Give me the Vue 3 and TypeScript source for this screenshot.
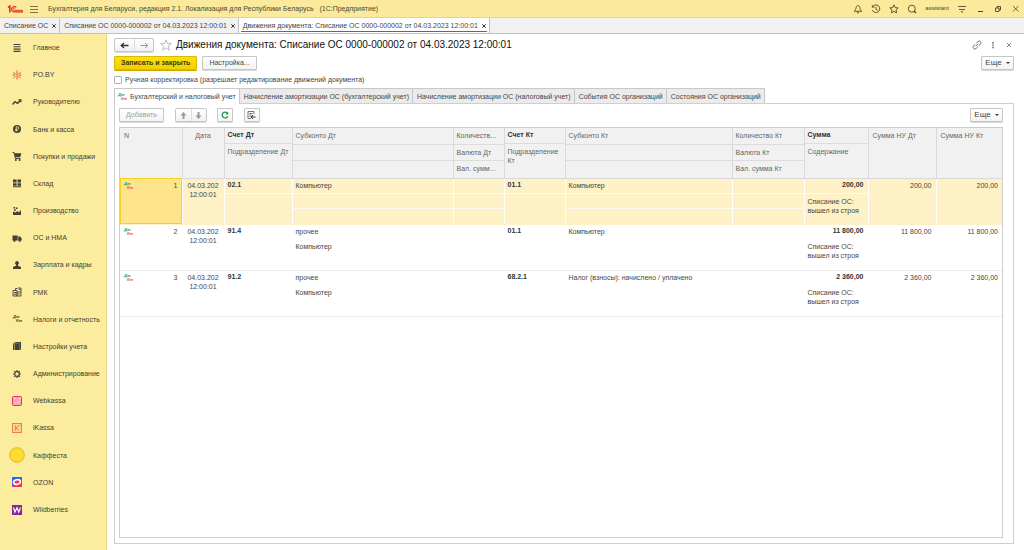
<script setup lang="ts">
import { ref } from 'vue'

interface Section { id: string; label: string }
interface Entry {
  n: number
  debit: string
  subDebit: string[]
  credit: string
  subCredit: string[]
  sum: string
}

const sections: Section[] = [
  { id: 'main', label: 'Главное' },
  { id: 'po', label: 'PO.BY' },
  { id: 'chief', label: 'Руководителю' },
  { id: 'bank', label: 'Банк и касса' },
  { id: 'cart', label: 'Покупки и продажи' },
  { id: 'store', label: 'Склад' },
  { id: 'factory', label: 'Производство' },
  { id: 'truck', label: 'ОС и НМА' },
  { id: 'person', label: 'Зарплата и кадры' },
  { id: 'rmk', label: 'РМК' },
  { id: 'tax', label: 'Налоги и отчетность' },
  { id: 'books', label: 'Настройки учета' },
  { id: 'gear', label: 'Администрирование' },
  { id: 'webkassa', label: 'Webkassa' },
  { id: 'ikassa', label: 'iKassa' },
  { id: 'coffee', label: 'Каффеста' },
  { id: 'ozon', label: 'OZON' },
  { id: 'wb', label: 'Wildberries' },
]

const windows = [
  'Списание ОС',
  'Списание ОС 0000-000002 от 04.03.2023 12:00:01',
  'Движения документа: Списание ОС 0000-000002 от 04.03.2023 12:00:01',
]
const activeWindow = ref(2)

const registers = [
  'Бухгалтерский и налоговый учет',
  'Начисление амортизации ОС (бухгалтерский учет)',
  'Начисление амортизации ОС (налоговый учет)',
  'События ОС организаций',
  'Состояния ОС организаций',
]
const activeRegister = ref(0)
const manual = ref(false)
const selected = ref(1)

const entries: Entry[] = [
  { n: 1, debit: '02.1', subDebit: ['Компьютер', '', ''], credit: '01.1', subCredit: ['Компьютер', '', ''], sum: '200,00' },
  { n: 2, debit: '91.4', subDebit: ['прочее', 'Компьютер', ''], credit: '01.1', subCredit: ['Компьютер', '', ''], sum: '11 800,00' },
  { n: 3, debit: '91.2', subDebit: ['прочее', 'Компьютер', ''], credit: '68.2.1', subCredit: ['Налог (взносы): начислено / уплачено', '', ''], sum: '2 360,00' },
]
</script>

<template>
  <div class="app">
    <header class="titlebar">
      <svg class="logo" width="17" height="10" viewBox="0 0 17 10" fill="none" stroke="#e0241b">
        <path d="M1 3.5 2.8 2V8.5" stroke-width="1.5" />
        <path d="M9.3 3.4A2.7 2.7 0 1 0 7.5 7.9H16" stroke-width="1.1" />
        <path d="M8.2 4.4A1.2 1.2 0 1 0 7.5 6.3H16" stroke-width="0.9" />
      </svg>
      <button class="plain" aria-label="Меню">
        <svg width="8" height="8" viewBox="0 0 8 8" stroke="#5c5636"><path d="M0 1.5h8M0 4.5h8M0 7.5h8" stroke-width="0.8" /></svg>
      </button>
      <span class="app-title">Бухгалтерия для Беларуси, редакция 2.1. Локализация для Республики Беларусь &nbsp; (1С:Предприятие)</span>
      <div class="sysicons">
        <button class="plain" aria-label="Уведомления">
          <svg width="10" height="10" viewBox="0 0 10 10" fill="none" stroke="#4a4630" stroke-width="0.9"><path d="M1.2 7.3C2.8 6.2 2.7 4.600 3.200 3.300 3.600 2.100 4.300 1.400 5 1.400s1.400.7 1.800 1.900c.5 1.300.4 2.900 2 4zM4 8.700h2" /></svg>
        </button>
        <button class="plain" aria-label="История">
          <svg width="10" height="10" viewBox="0 0 10 10" fill="none" stroke="#4a4630" stroke-width="0.9"><path d="M1.6 3A3.8 3.8 0 1 1 1.4 6M1.3 1.2v2h2M5 2.8v2.4l1.8 1.2" /></svg>
        </button>
        <button class="plain" aria-label="Избранное">
          <svg width="10" height="10" viewBox="0 0 10 10" fill="none" stroke="#4a4630" stroke-width="0.9"><path d="m5 .9 1.2 2.7 3 .3-2.2 2 .6 3L5 7.4 2.4 8.9l.6-3-2.2-2 3-.3z" /></svg>
        </button>
        <button class="plain" aria-label="Поиск">
          <svg width="10" height="10" viewBox="0 0 10 10" fill="none" stroke="#4a4630" stroke-width="0.9"><circle cx="4.8" cy="4.7" r="3.5" /><path d="m7 7 2 2" stroke-width="1.4" /></svg>
        </button>
        <span class="user">assistant</span>
        <button class="plain" aria-label="Сервис">
          <svg width="10" height="10" viewBox="0 0 10 10" fill="#4a4630" stroke="#4a4630"><path d="M1 2.5h8M2 5.5h6" stroke-width="0.9" /><path d="M4 7.6h2l-1 1z" stroke-width=".4" /></svg>
        </button>
        <button class="plain" aria-label="Свернуть">
          <svg width="10" height="10" viewBox="0 0 10 10" stroke="#4a4630"><path d="M3 7.5h5" /></svg>
        </button>
        <button class="plain" aria-label="Развернуть">
          <svg width="10" height="10" viewBox="0 0 10 10" fill="none" stroke="#4a4630" stroke-width="0.9"><path d="M2.5 4H6v3.500H2.500zM4 4V2.500h3.500V6H6" /></svg>
        </button>
        <button class="plain" aria-label="Закрыть приложение">
          <svg width="10" height="10" viewBox="0 0 10 10" stroke="#4a4630" stroke-width="0.8"><path d="m2 2 5.5 5.5M7.5 2 2 7.5" /></svg>
        </button>
      </div>
    </header>

    <nav class="windows" aria-label="Открытые окна">
      <div v-for="(w, i) in windows" :key="w" class="window" :class="{ active: i === activeWindow }">
        <button class="plain" @click="activeWindow = i">{{ w }}</button>
        <button class="plain" aria-label="Закрыть">
          <svg width="4" height="4" viewBox="0 0 4 4" stroke="#333"><path d="m.3.3 3.4 3.4M3.7.3.3 3.7" /></svg>
        </button>
      </div>
    </nav>

    <div class="workspace">
      <aside class="sidebar">
        <ul>
          <li v-for="s in sections" :key="s.id">
            <a href="#">
              <svg class="icon" viewBox="0 0 16 16" fill="none" stroke="none">
                <path v-if="s.id === 'main'" d="M4.500 4.500h7M4.500 6.800h7M4.500 9.100h7M4.500 11.400h7" stroke="#454133" stroke-width="1.1" />
                <path v-else-if="s.id === 'po'" d="M8 3.500v9M4 5.500l2.700 1.700M12 5.500 9.300 7.200M3.700 8.200h2.500M12.300 8.200H9.800M4.500 11l2-1.600M11.500 11l-2-1.600" stroke="#f0502f" stroke-width="1" />
                <g v-else-if="s.id === 'chief'"><path d="m3.500 10.500 2.500-2.800 2.500 1.700 3-3" stroke="#454133" stroke-width="1.5" /><path d="M9 5.300h3.500v3.500z" fill="#454133" /></g>
                <g v-else-if="s.id === 'bank'"><circle cx="8" cy="8" r="4" fill="#454133" /><path d="M7.2 10.6V5.800h1.300a1.200 1.200 0 0 1 0 2.500H6.300M6.300 9.500h2.300" stroke="#faeb9d" stroke-width=".8" /></g>
                <g v-else-if="s.id === 'cart'"><path d="M3.500 4.500h1.600l1.300 6h5" stroke="#454133" stroke-width="1" /><path d="M5.200 5.200h7.200l-1.200 4H6.300z" fill="#454133" /><circle cx="6.8" cy="12" r="1" fill="#454133" /><circle cx="10.7" cy="12" r="1" fill="#454133" /></g>
                <path v-else-if="s.id === 'store'" d="M4 4.500h3.600v3H4zM8.500 4.500H12v3H8.500zM4 8.300h3.600v2.500H4zM8.500 8.300H12v2.500H8.500zM4 11.300h8.200v.9H4z" fill="#454133" />
                <path v-else-if="s.id === 'factory'" d="M4 12V8.500l2.500 1 2-1.500 1.200 1.500L12 7v5zM4.500 4h1.700v1.500H4.500zM7 4.500h1.500V6H7zM5 6.200h1.800v1.500H5z" fill="#454133" />
                <g v-else-if="s.id === 'truck'"><path d="M3.500 5.500h5.200v5H3.500zM9.200 6.500h2l1.500 2v2H9.200z" fill="#454133" /><circle cx="5.5" cy="10.8" r="1.1" fill="#454133" /><circle cx="10.7" cy="10.8" r="1.1" fill="#454133" /></g>
                <path v-else-if="s.id === 'person'" d="M8 4a2 2 0 0 1 1 3.700v1l3 1.300v2H4v-2l3-1.300v-1A2 2 0 0 1 8 4z" fill="#454133" />
                <g v-else-if="s.id === 'rmk'" stroke="#454133" stroke-width=".9"><path d="M4 6.500h4V12H4zM6.500 6V4.500h2M8 8h4v4H8zM9 4h3v4" /><path d="M5 8.500h2M5 10.200h2M9.200 10h1.700M9.700 5.500h2" /></g>
                <g v-else-if="s.id === 'tax'" class="tax" fill="#454133"><text x="4" y="7">Дт</text><text x="7" y="11">Кт</text></g>
                <g v-else-if="s.id === 'books'"><path d="M4 5.500 5 5v7H4z" fill="#454133" /><path d="M5.500 4.500 7 4h5v7.500L10.500 12h-5z" fill="#454133" /><path d="M10.400 12V5.300H5.800" stroke="#a59c6a" stroke-width=".5" /></g>
                <g v-else-if="s.id === 'gear'" stroke="#454133"><circle cx="8" cy="8" r="2.3" stroke-width="1.2" /><path d="M8 4v1.500M8 10.500V12M4 8h1.500M10.500 8H12M5.200 5.200l1 1M9.800 9.800l1 1M10.800 5.200l-1 1M6.200 9.800l-1 1" stroke-width="1.1" /></g>
                <g v-else-if="s.id === 'webkassa'"><rect x="3.5" y="3.5" width="9" height="9" rx="1" fill="#fba0ac" stroke="#f0305a" /><path d="M5 5.500h1.500M10 5h1v1.500M7.500 7h1M5.500 10h1M8 9.500l1.500.5M10 8.500h1" stroke="#fff" stroke-width=".9" /></g>
                <g v-else-if="s.id === 'ikassa'"><rect x="3.5" y="3.5" width="9" height="9" fill="#fbd98c" stroke="#ee7440" stroke-width=".9" /><path d="M6.500 5.500v5M10 5.500 7 8l3 2.500M11 5v1" stroke="#ee7440" stroke-width=".9" /></g>
                <circle v-else-if="s.id === 'coffee'" cx="8" cy="8" r="7.3" fill="#fddd2e" stroke="#dcb127" stroke-width=".9" />
                <g v-else-if="s.id === 'ozon'"><rect x="3" y="3" width="10" height="10" rx="1" fill="#1f66f4" /><path d="M3 11.500 13 9v3a1 1 0 0 1-1 1H4a1 1 0 0 1-1-1z" fill="#f5305d" /><ellipse cx="8" cy="8" rx="3.5" ry="2.3" stroke="#fff" stroke-width="1.6" transform="rotate(-12 8 8)" fill="#f5305d" /></g>
                <g v-else><rect x="3" y="3" width="10" height="10" fill="#8a239c" /><path d="m4.500 5.500 1.400 4.700L8 5.800l1.800 4.400 1.700-4.700" stroke="#fff" stroke-width="1.2" /></g>
              </svg>
              <span>{{ s.label }}</span>
            </a>
          </li>
        </ul>
      </aside>

      <main class="form">
        <div class="form-head">
          <div class="pair">
            <button aria-label="Назад"><svg width="9" height="7" viewBox="0 0 9 7" fill="none" stroke="#333" stroke-width="1.3"><path d="M8.500 3.500H1.500M4 1 1.200 3.500 4 6" /></svg></button>
            <button aria-label="Вперед"><svg width="9" height="7" viewBox="0 0 9 7" fill="none" stroke="#999" stroke-width="1"><path d="M.5 3.500h7M5 1l2.800 2.500L5 6" /></svg></button>
          </div>
          <button class="plain star" aria-label="В избранное">
            <svg width="12" height="12" viewBox="0 0 12 12" fill="none" stroke="#aaa" stroke-width=".8"><path d="m6 .8 1.400 3.700 3.900.2-3 2.500 1 3.900L6 8.900l-3.300 2.200 1-3.900-3-2.500 3.900-.2z" /></svg>
          </button>
          <h1>Движения документа: Списание ОС 0000-000002 от 04.03.2023 12:00:01</h1>
          <div class="head-icons">
            <button class="plain" aria-label="Ссылка"><svg width="10" height="10" viewBox="0 0 10 10" fill="none" stroke="#666" stroke-width=".9"><path d="M4.200 3.200 6 1.500a1.700 1.700 0 0 1 2.500 2.500L6.800 5.800M5.800 6.800 4 8.500A1.700 1.700 0 0 1 1.500 6l1.700-1.800M3.700 6.300l2.600-2.600" /></svg></button>
            <button class="plain" aria-label="Дополнительно"><svg width="10" height="10" viewBox="0 0 10 10" fill="#555"><path d="M4.300 2h1.400v1.400H4.300zM4.300 4.400h1.400v1.400H4.300zM4.300 6.800h1.400v1.400H4.300z" /></svg></button>
            <button class="plain" aria-label="Закрыть форму"><svg width="10" height="10" viewBox="0 0 10 10" stroke="#666" stroke-width=".8"><path d="m3 3 4 4M7 3 3 7" /></svg></button>
          </div>
        </div>

        <div class="commands">
          <button class="btn primary">Записать и закрыть</button>
          <button class="btn">Настройка...</button>
          <button class="btn more">Еще<i class="caret"></i></button>
        </div>

        <label class="manual"><input v-model="manual" type="checkbox" />Ручная корректировка (разрешает редактирование движений документа)</label>

        <div class="tabs" role="tablist">
          <button v-for="(r, i) in registers" :key="r" role="tab" :aria-selected="i === activeRegister" :class="{ active: i === activeRegister }" @click="activeRegister = i">
            <svg v-if="i === 0" class="dtkt" viewBox="0 0 9 9"><text x="0" y="4" fill="#18a150">Дт</text><text x="3" y="8" fill="#ee4a3c">Кт</text></svg>{{ r }}
          </button>
        </div>

        <section class="panel">
          <div class="tools">
            <button class="btn add" disabled>Добавить</button>
            <div class="pair small">
              <button aria-label="Вверх" disabled><svg width="7" height="7" viewBox="0 0 7 7" fill="#9a9a9a"><path d="M3.500 0 6.500 3.500h-2V7h-2V3.500h-2z" /></svg></button>
              <button aria-label="Вниз" disabled><svg width="7" height="7" viewBox="0 0 7 7" fill="#9a9a9a"><path d="M3.500 7 .5 3.500h2V0h2v3.500h2z" /></svg></button>
            </div>
            <button class="btn square" aria-label="Обновить"><svg width="8" height="8" viewBox="0 0 8 8" fill="none" stroke="#149a48" stroke-width="1.3"><path d="M6.700 5.200A2.900 2.900 0 1 1 6 1.900" /><path d="M7.200.5v2.900H4.500z" fill="#149a48" stroke="none" /></svg></button>
            <button class="btn square" aria-label="Настройка списка"><svg width="9" height="9" viewBox="0 0 9 9" fill="none" stroke="#555" stroke-width=".8"><path d="M4 7.500H1v-7h6V3M2.500 2.500h3M2.500 4h2M2.500 5.500h1" /><path d="M4 6h4.500M6 4.200 4 6l2 1.800" stroke="#333" stroke-width="1" /></svg></button>
            <button class="btn more">Еще<i class="caret"></i></button>
          </div>

          <div class="grid">
            <table>
              <colgroup>
                <col class="c-n" /><col class="c-date" /><col class="c-acc" /><col class="c-sub" /><col class="c-qty" /><col class="c-acc2" /><col /><col class="c-qty2" /><col class="c-sum" /><col class="c-nu" /><col class="c-nu2" />
              </colgroup>
              <thead>
                <tr>
                  <th>N</th>
                  <th class="center">Дата</th>
                  <th><div class="duo"><b>Счет Дт</b><span class="nowrap">Подразделение Дт</span></div></th>
                  <th><div class="trio"><span>Субконто Дт</span><span></span><span></span></div></th>
                  <th><div class="trio"><span>Количеств...</span><span>Валюта Дт</span><span>Вал. сумм...</span></div></th>
                  <th><div class="duo"><b>Счет Кт</b><span>Подразделение Кт</span></div></th>
                  <th><div class="trio"><span>Субконто Кт</span><span></span><span></span></div></th>
                  <th><div class="trio"><span>Количество Кт</span><span>Валюта Кт</span><span>Вал. сумма Кт</span></div></th>
                  <th><div class="duo"><b>Сумма</b><span>Содержание</span></div></th>
                  <th>Сумма НУ Дт</th>
                  <th>Сумма НУ Кт</th>
                </tr>
              </thead>
              <tbody>
                <tr v-for="e in entries" :key="e.n" :class="{ selected: e.n === selected }" @click="selected = e.n">
                  <td class="num"><div class="mark"><svg class="dtkt" viewBox="0 0 9 9"><text x="0" y="4" fill="#18a150">Дт</text><text x="3" y="8" fill="#ee4a3c">Кт</text></svg><span>{{ e.n }}</span></div></td>
                  <td class="center">04.03.202<br />12:00:01</td>
                  <td><div class="duo"><b>{{ e.debit }}</b><span></span></div></td>
                  <td><div class="trio"><span v-for="(t, i) in e.subDebit" :key="i">{{ t }}</span></div></td>
                  <td><div class="trio"><span></span><span></span><span></span></div></td>
                  <td><div class="duo"><b>{{ e.credit }}</b><span></span></div></td>
                  <td><div class="trio"><span v-for="(t, i) in e.subCredit" :key="i">{{ t }}</span></div></td>
                  <td><div class="trio"><span></span><span></span><span></span></div></td>
                  <td><div class="duo"><b class="right">{{ e.sum }}</b><span>Списание ОС: вышел из строя</span></div></td>
                  <td class="right">{{ e.sum }}</td>
                  <td class="right">{{ e.sum }}</td>
                </tr>
              </tbody>
            </table>
          </div>
        </section>
      </main>
    </div>
  </div>
</template>

<style>
body { margin: 0; }
</style>

<style scoped>
* { box-sizing: border-box; }
.app {
  display: flex;
  flex-direction: column;
  min-height: 100vh;
  background: #fff;
  color: #454545;
  font: 7px/9px "Liberation Sans", Arial, sans-serif;
}
button { font: inherit; color: inherit; cursor: pointer; }
button svg { display: block; }
.plain { padding: 0; border: 0; background: none; }
.titlebar {
  display: flex;
  align-items: center;
  height: 17px;
  padding: 0 3px 0 7px;
  background: #fbea9b;
  color: #4a4630;
}
.logo { margin-right: 6px; }
.app-title { margin-left: 10px; white-space: nowrap; }
.sysicons { display: flex; align-items: center; gap: 8px; margin-left: auto; }
.user { font-size: 6px; }
.windows {
  display: flex;
  height: 17px;
  border-top: 1px solid #d8d2b0;
  border-bottom: 1px solid #c2c2c2;
  background: #f1f1f1;
}
.window {
  display: flex;
  align-items: center;
  gap: 4px;
  padding: 0 3px 0 4px;
  border-right: 1px solid #c2c2c2;
  white-space: nowrap;
}
.window.active { background: linear-gradient(#0a9a50, #0a9a50) 2px 13px / calc(100% - 4px) 1px no-repeat #fff; }
.workspace { display: flex; flex: 1; }
.sidebar {
  display: flex;
  flex: none;
  width: 107px;
  padding-bottom: 27px;
  border-right: 1px solid #e6d88c;
  background: #fbec9e;
}
ul { display: flex; flex: 1; flex-direction: column; margin: 0; padding: 0; list-style: none; }
li { display: flex; flex: 1; max-height: 32px; }
li a { display: flex; flex: 1; align-items: center; gap: 8px; padding-left: 9px; color: #45412f; text-decoration: none; white-space: nowrap; }
.icon { flex: none; width: 16px; height: 16px; }
.form { display: flex; flex: 1; flex-direction: column; min-width: 0; padding: 4px 10px 6px 7px; }
.form-head { display: flex; align-items: center; height: 14px; }
.pair { display: flex; height: 14px; border: 1px solid #c6c6c6; border-radius: 2px; background: linear-gradient(#fff, #f1f1f1); box-shadow: 0 1px 0 #ddd; }
.pair button { display: flex; align-items: center; justify-content: center; width: 19px; padding: 0; border: 0; background: none; }
.pair button + button { border-left: 1px solid #ddd; }
.pair.small button { width: 15px; }
.star { margin: 0 4px 0 6px; }
h1 { margin: 0; color: #111; font-size: 10px; font-weight: 400; line-height: 14px; white-space: nowrap; }
.head-icons { display: flex; gap: 6px; margin-left: auto; }
.commands { display: flex; gap: 5px; margin-top: 4px; }
.btn {
  height: 14px;
  padding: 0 6px;
  border: 1px solid #c6c6c6;
  border-radius: 1px;
  background: linear-gradient(#fff, #f3f3f3);
  box-shadow: 0 1px 0 #d8d8d8;
  line-height: 12px;
  white-space: nowrap;
}
.btn.primary { border-color: #dcb800; background: linear-gradient(#fbdf10, #f3d000); color: #403a10; font-weight: 700; box-shadow: 0 1px 0 #c9a900; }
.btn.more { display: flex; align-items: center; justify-content: center; gap: 4px; width: 33px; margin-left: auto; padding: 0; font-size: 8px; }
.caret { width: 0; border: 2px solid transparent; border-top-color: #333; border-bottom: 0; }
.btn:disabled { color: #a0a0a0; }
.btn.square { display: flex; align-items: center; justify-content: center; width: 16px; padding: 0; }
.manual { display: flex; align-items: center; gap: 3px; height: 9px; margin-top: 5px; }
.manual input { width: 8px; height: 8px; margin: 0; appearance: none; border: 1px solid #b5b5b5; border-radius: 1px; background: #fff; }
.manual input:checked { background: #0a9a50; }
.tabs { display: flex; margin-top: 4px; }
.tabs button {
  display: flex;
  align-items: center;
  gap: 3px;
  height: 15px;
  padding: 0 3px 0 4px;
  border: 1px solid #c8c8c8;
  border-left: 0;
  border-bottom: 0;
  background: #ebebeb;
  white-space: nowrap;
}
.tabs button.active { position: relative; height: 16px; margin-bottom: -1px; padding-left: 3px; border-left: 1px solid #c8c8c8; background: #fff; }
.dtkt { flex: none; width: 9px; height: 9px; overflow: visible; font: italic 700 4px "Liberation Sans", Arial, sans-serif; }
.tax { font: italic 700 4px "Liberation Sans", Arial, sans-serif; }
.panel { display: flex; flex: 1; flex-direction: column; padding: 4px 10px 5px 4px; border: 1px solid #cfcfcf; }
.tools { display: flex; align-items: center; margin-bottom: 5px; }
.tools .pair { margin: 0 10px 0 11px; }
.tools .square { margin-right: 11px; }
.grid { flex: 1; border: 1px solid #cdcdcd; }
table { width: 100%; border-collapse: collapse; table-layout: fixed; }
.c-n { width: 62px; }
.c-date { width: 42px; }
.c-acc { width: 68px; }
.c-sub { width: 161px; }
.c-qty { width: 51px; }
.c-acc2 { width: 61px; }
.c-qty2 { width: 72px; }
.c-sum { width: 64px; }
.c-nu { width: 68px; }
.c-nu2 { width: 66px; }
th, td { height: 46px; padding: 2px 4px 0; border-right: 1px solid #fff; border-bottom: 1px solid #ececec; text-align: left; vertical-align: top; font-weight: 400; }
th { height: 50px; padding-top: 3px; border-color: #d9d9d9; background: #f1f1f1; color: #666; }
th:last-child, td:last-child { border-right: 0; }
th.center, td.center { text-align: center; padding-left: 2px; padding-right: 2px; }
.right { text-align: right; }
th:has(div), td:has(.duo), td:has(.trio) { padding: 0; }
.duo, .trio { display: flex; flex-direction: column; height: 45px; }
th .duo, th .trio { height: 49px; }
.duo > *, .trio > * { padding: 3px 4px 0 3px; }
td .trio > * { padding-top: 2px; }
.duo > b { height: 14px; padding-top: 1px; color: #333; }
th .duo > b { height: 15px; padding-top: 2px; }
.duo > span { flex: 1; }
.nowrap { white-space: nowrap; overflow: hidden; }
.trio > * { flex: 1; white-space: nowrap; overflow: hidden; }
th .duo > * + *, th .trio > * + * { border-top: 1px solid #dcdcdc; }
.selected { background: #fef1c5; }
.selected td { border-bottom-color: #fef1c5; }
.selected .duo > * + *, .selected .trio > * + * { border-top: 1px solid #fffaf0; }
.mark { display: flex; justify-content: space-between; }
.selected .num { background: #ffe48e; outline: 1px solid #f8d020; outline-offset: -1px; }
</style>
